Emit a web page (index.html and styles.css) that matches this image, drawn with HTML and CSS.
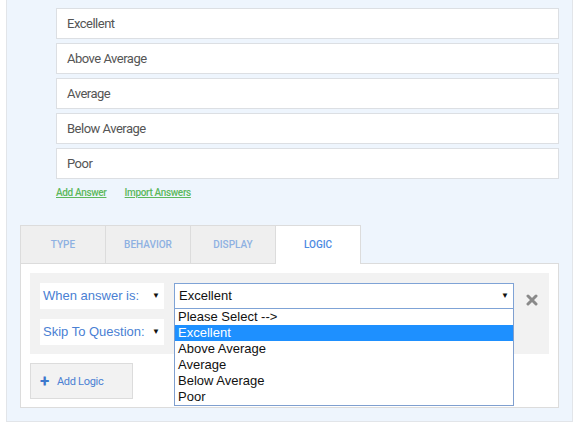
FILE: index.html
```html
<!DOCTYPE html>
<html lang="en">
<head>
    <meta charset="UTF-8">
    <title>Question Answers</title>
    <link rel="stylesheet" href="styles.css">
</head>
<body>
    <div class="panel">
        <div class="answers">
            <div class="answer">Excellent</div>
            <div class="answer">Above Average</div>
            <div class="answer">Average</div>
            <div class="answer">Below Average</div>
            <div class="answer">Poor</div>
            <div class="answer-links">
                <a href="#">Add Answer</a>
                <a href="#">Import Answers</a>
            </div>
        </div>

        <div class="tabs">
            <div class="tab">Type</div>
            <div class="tab">Behavior</div>
            <div class="tab">Display</div>
            <div class="tab active">Logic</div>
        </div>
        <div class="tab-content">
            <div class="logic-row">
                <div class="logic-labels">
                    <div class="label-select">When answer is:<span class="arrow">&#9660;</span></div>
                    <div class="label-select">Skip To Question:<span class="arrow">&#9660;</span></div>
                </div>
                <div class="answer-select">
                    <div class="select-box">Excellent<span class="arrow">&#9660;</span></div>
                    <ul class="select-list">
                        <li>Please Select --&gt;</li>
                        <li class="selected">Excellent</li>
                        <li>Above Average</li>
                        <li>Average</li>
                        <li>Below Average</li>
                        <li>Poor</li>
                    </ul>
                </div>
                <div class="remove">
                    <svg width="12" height="12" viewBox="0 0 12 12">
                        <path d="M2 2 L10 10 M10 2 L2 10" stroke="#8a8a8a" stroke-width="3" stroke-linecap="round"/>
                    </svg>
                </div>
            </div>
            <button class="add-logic"><span class="plus">+</span>Add Logic</button>
        </div>
    </div>
</body>
</html>
```

FILE: styles.css
```css
body {
    margin: 0;
    background-color: #fff;
    font-family: Roboto, 'Liberation Sans', sans-serif;
}
.panel {
    margin-left: 6px;
    width: 567px;
    box-sizing: border-box;
    background-color: #eef5fd;
    border: 1px solid #e2e5e9;
    border-top: none;
    padding: 8px 0 13px 13px;
}
.answers {
    margin-left: 36px;
    width: 503px;
}
.answer {
    height: 29px;
    line-height: 29px;
    background-color: #fff;
    border: 1px solid #dcdfe3;
    margin-bottom: 4px;
    padding-left: 10px;
    font-size: 13px;
    color: #555;
    letter-spacing: -0.5px;
}
.answer-links {
    padding-top: 4px;
    height: 38px;
    font-size: 10px;
    letter-spacing: -0.35px;
}
.answer-links a {
    color: #5cb85c;
    margin-right: 16px;
    font-weight: 500;
}
.tabs {
    display: flex;
    width: 539px;
}
.tab {
    width: 86px;
    height: 38px;
    box-sizing: border-box;
    line-height: 37px;
    text-align: center;
    background-color: #efefef;
    border: 1px solid #dcdcdc;
    border-bottom: none;
    margin-right: -1px;
    font-size: 10px;
    font-weight: 500;
    text-transform: uppercase;
    color: #8eb1e2;
}
.tab.active {
    background-color: #fff;
    color: #4d8ae2;
    height: 39px;
    margin-bottom: -1px;
    position: relative;
}
.tab-content {
    width: 539px;
    box-sizing: border-box;
    background-color: #fff;
    border: 1px solid #dcdcdc;
    padding: 9px 9px 8px 9px;
}
.logic-row {
    display: flex;
    align-items: flex-start;
    background-color: #f2f2f2;
    padding: 10px;
    height: 61px;
    margin-bottom: 9px;
}
.logic-labels {
    display: flex;
    flex-direction: column;
    gap: 10px;
    width: 124px;
    margin-right: 10px;
}
.label-select {
    height: 26px;
    line-height: 26px;
    background-color: #fff;
    padding-left: 3px;
    font-family: 'Liberation Sans', Arial, sans-serif;
    font-size: 13px;
    color: #4a80d3;
    display: flex;
    justify-content: space-between;
}
.arrow {
    font-size: 8px;
    color: #111;
    margin-right: 4px;
}
.answer-select {
    position: relative;
    width: 340px;
}
.select-box {
    height: 24px;
    line-height: 24px;
    border: 1px solid #7fa3d6;
    background-color: #fff;
    padding-left: 4px;
    font-family: 'Liberation Sans', Arial, sans-serif;
    font-size: 13px;
    color: #111;
    display: flex;
    justify-content: space-between;
}
.select-list {
    position: absolute;
    top: 26px;
    left: 0;
    width: 340px;
    box-sizing: border-box;
    margin: 0;
    padding: 0;
    list-style: none;
    background-color: #fff;
    border: 1px solid #7f9fcf;
    border-top: none;
    font-family: 'Liberation Sans', Arial, sans-serif;
    font-size: 13px;
    color: #111;
    z-index: 2;
}
.select-list li {
    height: 16px;
    line-height: 16px;
    padding-left: 3px;
}
.select-list li.selected {
    background-color: #1e90ff;
    color: #fff;
}
.remove {
    margin-left: 12px;
    padding-top: 8px;
}
.add-logic {
    width: 103px;
    height: 36px;
    background-color: #f2f2f2;
    border: 1px solid #dcdcdc;
    padding: 0 0 0 9px;
    text-align: left;
    font-family: Roboto, sans-serif;
    font-size: 11px;
    letter-spacing: -0.3px;
    color: #4a80d3;
    cursor: pointer;
}
.plus {
    font-size: 17px;
    font-weight: bold;
    color: #3d78cc;
    margin-right: 8px;
    vertical-align: -2px;
}
```
